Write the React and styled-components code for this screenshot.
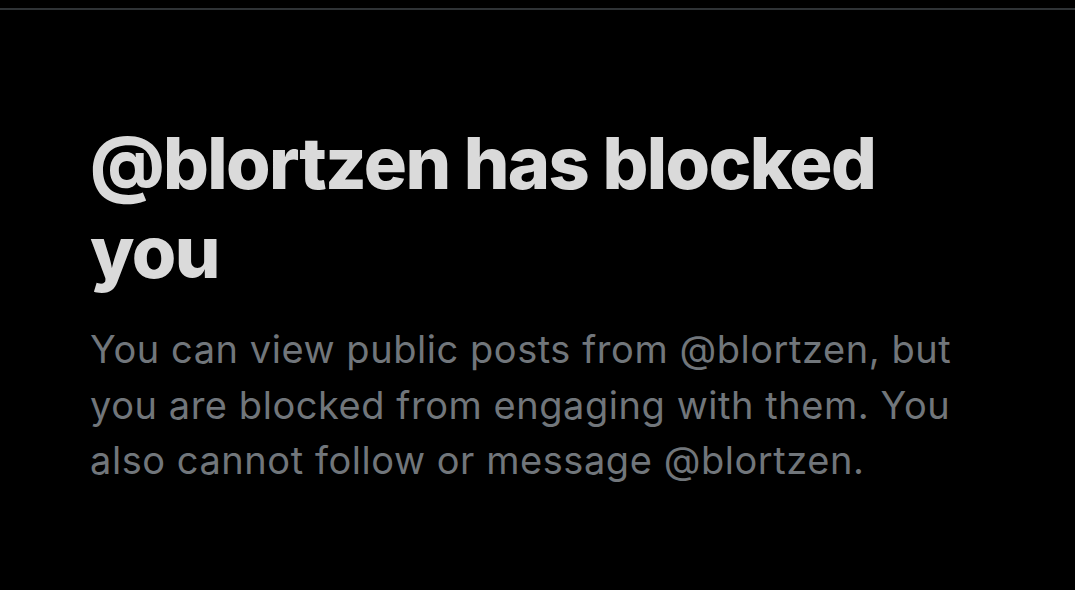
import styled, { createGlobalStyle } from "styled-components";

const GlobalStyle = createGlobalStyle`
  html, body {
    margin: 0;
    padding: 0;
    background: #000000;
  }
  body {
    font-family: Inter, "Noto Sans", sans-serif;
  }
`;

const Page = styled.div`
  padding-top: 8px;
  min-height: 590px;
  box-sizing: border-box;
`;

const Panel = styled.section`
  border-top: 2px solid #2f3336;
  padding: 108px 90px 0;
`;

const Title = styled.h1`
  margin: 0;
  font-size: 72px;
  line-height: 89px;
  font-weight: 800;
  letter-spacing: -1.6px;
  color: #dadada;
`;

const Message = styled.p`
  margin: 26px 0 0;
  font-size: 38px;
  line-height: 55.5px;
  font-weight: 400;
  letter-spacing: 0.55px;
  color: #71767b;
`;

const App = () => {
  return (
    <>
      <GlobalStyle />
      <Page>
        <Panel>
          <Title>@blortzen has blocked you</Title>
          <Message>
            You can view public posts from @blortzen, but you are blocked from
            engaging with them. You also cannot follow or message @blortzen.
          </Message>
        </Panel>
      </Page>
    </>
  );
};

export default App;
